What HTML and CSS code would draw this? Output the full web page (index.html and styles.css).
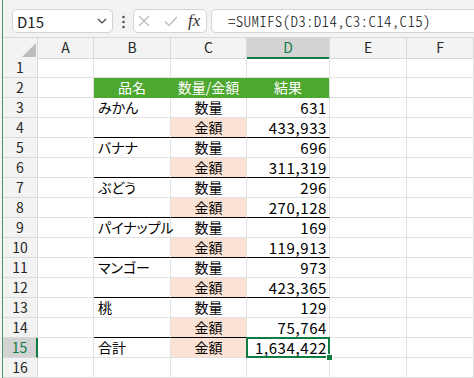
FILE: index.html
```html
<!DOCTYPE html>
<html lang="ja">
<head>
<meta charset="UTF-8" />
<title>SUMIFS</title>
<link rel="stylesheet" href="styles.css">
</head>
<body>

<div class="edge"></div>

<div class="excel">

  <!-- 数式バー -->
  <div class="toolbar">
    <div class="namebox">
      <span>D15</span>
      <svg width="10" height="6" viewBox="0 0 10 6"><path d="M1 1 L5 5 L9 1" fill="none" stroke="#444" stroke-width="1.2"/></svg>
    </div>
    <svg class="grip" width="3" height="14" viewBox="0 0 3 14"><circle cx="1.5" cy="2" r="1.3" fill="#555"/><circle cx="1.5" cy="7" r="1.3" fill="#555"/><circle cx="1.5" cy="12" r="1.3" fill="#555"/></svg>
    <div class="fxbox">
      <svg class="cancel" width="12" height="12" viewBox="0 0 12 12"><path d="M1 1 L11 11 M11 1 L1 11" stroke="#b8b8b8" stroke-width="1.2"/></svg>
      <svg class="enter" width="14" height="11" viewBox="0 0 14 11"><path d="M1 5.5 L5 9.5 L13 1" fill="none" stroke="#b8b8b8" stroke-width="1.2"/></svg>
      <span class="fx">fx</span>
    </div>
    <div class="formula">=SUMIFS(D3:D14,C3:C14,C15)</div>
  </div>

  <!-- シート -->
  <div class="sheet">
    <div class="row head">
      <div class="corner"><span class="tri"></span></div>
      <div class="ch">A</div><div class="ch">B</div><div class="ch">C</div>
      <div class="ch sel">D</div><div class="ch">E</div><div class="ch">F</div>
    </div>

    <div class="row">
      <div class="rh">1</div><div class="c"></div><div class="c"></div><div class="c"></div><div class="c"></div><div class="c"></div><div class="c"></div>
    </div>
    <div class="row">
      <div class="rh">2</div><div class="c"></div>
      <div class="c th">品名</div><div class="c th">数量/金額</div><div class="c th last">結果</div>
      <div class="c"></div><div class="c"></div>
    </div>

    <div class="row">
      <div class="rh">3</div><div class="c"></div>
      <div class="c name">みかん</div><div class="c kind">数量</div><div class="c val">631</div>
      <div class="c"></div><div class="c"></div>
    </div>
    <div class="row">
      <div class="rh">4</div><div class="c"></div>
      <div class="c name line"></div><div class="c kind amt line">金額</div><div class="c val line">433,933</div>
      <div class="c"></div><div class="c"></div>
    </div>

    <div class="row">
      <div class="rh">5</div><div class="c"></div>
      <div class="c name">バナナ</div><div class="c kind">数量</div><div class="c val">696</div>
      <div class="c"></div><div class="c"></div>
    </div>
    <div class="row">
      <div class="rh">6</div><div class="c"></div>
      <div class="c name line"></div><div class="c kind amt line">金額</div><div class="c val line">311,319</div>
      <div class="c"></div><div class="c"></div>
    </div>

    <div class="row">
      <div class="rh">7</div><div class="c"></div>
      <div class="c name">ぶどう</div><div class="c kind">数量</div><div class="c val">296</div>
      <div class="c"></div><div class="c"></div>
    </div>
    <div class="row">
      <div class="rh">8</div><div class="c"></div>
      <div class="c name line"></div><div class="c kind amt line">金額</div><div class="c val line">270,128</div>
      <div class="c"></div><div class="c"></div>
    </div>

    <div class="row">
      <div class="rh">9</div><div class="c"></div>
      <div class="c name">パイナップル</div><div class="c kind">数量</div><div class="c val">169</div>
      <div class="c"></div><div class="c"></div>
    </div>
    <div class="row">
      <div class="rh">10</div><div class="c"></div>
      <div class="c name line"></div><div class="c kind amt line">金額</div><div class="c val line">119,913</div>
      <div class="c"></div><div class="c"></div>
    </div>

    <div class="row">
      <div class="rh">11</div><div class="c"></div>
      <div class="c name">マンゴー</div><div class="c kind">数量</div><div class="c val">973</div>
      <div class="c"></div><div class="c"></div>
    </div>
    <div class="row">
      <div class="rh">12</div><div class="c"></div>
      <div class="c name line"></div><div class="c kind amt line">金額</div><div class="c val line">423,365</div>
      <div class="c"></div><div class="c"></div>
    </div>

    <div class="row">
      <div class="rh">13</div><div class="c"></div>
      <div class="c name">桃</div><div class="c kind">数量</div><div class="c val">129</div>
      <div class="c"></div><div class="c"></div>
    </div>
    <div class="row">
      <div class="rh">14</div><div class="c"></div>
      <div class="c name line"></div><div class="c kind amt line">金額</div><div class="c val line">75,764</div>
      <div class="c"></div><div class="c"></div>
    </div>

    <div class="row">
      <div class="rh sel">15</div><div class="c"></div>
      <div class="c name">合計</div><div class="c kind amt">金額</div><div class="c val active">1,634,422</div>
      <div class="c"></div><div class="c"></div>
    </div>
    <div class="row">
      <div class="rh">16</div><div class="c"></div><div class="c"></div><div class="c"></div><div class="c"></div><div class="c"></div><div class="c"></div>
    </div>
  </div>

</div>

</body>
</html>
```

FILE: styles.css
```css
body {
  margin: 0;
  width: 474px;
  height: 378px;
  overflow: hidden;
  display: flex;
  background-color: #fff;
  font-family: "Noto Sans CJK JP", sans-serif;
  color: #000;
}

.edge {
  width: 2px;
  flex-shrink: 0;
  background-color: #f4f4f4;
  border-right: 1px solid #4f9a6a;
}

.excel {
  flex: 1;
  min-width: 0;
  display: flex;
  flex-direction: column;
}

/* 数式バー */
.toolbar {
  height: 39px;
  box-sizing: border-box;
  padding-top: 9px;
  display: flex;
  align-items: flex-start;
  background-color: #f3f3f3;
  border-bottom: 1px solid #d9d9d9;
}

.namebox {
  margin-left: 9px;
  width: 101px;
  height: 24px;
  box-sizing: border-box;
  padding: 0 5px 0 4px;
  display: flex;
  align-items: center;
  justify-content: space-between;
  background-color: #fff;
  border: 1px solid #d4d4d4;
  border-radius: 5px;
  font-size: 15px;
  color: #222;
}

.grip {
  margin: 6px 0 0 9px;
}

.fxbox {
  margin-left: 8px;
  width: 74px;
  height: 24px;
  box-sizing: border-box;
  padding-left: 4px;
  display: flex;
  align-items: center;
  background-color: #fff;
  border: 1px solid #d4d4d4;
  border-radius: 5px;
}

.fxbox .enter {
  margin-left: 14px;
}

.fx {
  margin-left: 10px;
  font-family: "Liberation Serif", serif;
  font-style: italic;
  font-size: 17px;
  color: #333;
  line-height: 20px;
}

.formula {
  margin-left: 4px;
  margin-right: -10px;
  flex: 1;
  height: 24px;
  box-sizing: border-box;
  padding-left: 16px;
  background-color: #fff;
  border: 1px solid #d4d4d4;
  border-radius: 5px;
  font-size: 15px;
  line-height: 22px;
  letter-spacing: 0.3px;
  font-feature-settings: "hwid";
  font-weight: 300;
  color: #111;
  white-space: nowrap;
}

/* シート */
.row {
  display: grid;
  grid-template-columns: 35px 56px 77px 76px 83px 77px 1fr;
  height: 20px;
}

.row > div {
  box-sizing: border-box;
  border-right: 1px solid #e1e1e1;
  border-bottom: 1px solid #e1e1e1;
  white-space: nowrap;
}

.head > div {
  background-color: #f3f3f3;
  border-color: #d9d9d9;
  font-size: 14px;
  line-height: 19px;
  text-align: center;
  color: #262626;
}

.corner {
  display: flex;
  align-items: flex-end;
  justify-content: flex-end;
  padding: 0 1px 1px 0;
}

.tri {
  width: 0;
  height: 0;
  border-left: 14px solid transparent;
  border-bottom: 14px solid #bdbdbd;
}

.head .sel {
  background-color: #d3d3d3;
  color: #107c41;
  border-bottom: 2px solid #107c41;
}

.row > .rh {
  background-color: #f3f3f3;
  border-color: #d9d9d9;
  font-size: 14px;
  line-height: 19px;
  text-align: center;
  color: #262626;
}

.row > .rh.sel {
  background-color: #d3d3d3;
  color: #107c41;
  border-right: 2px solid #107c41;
}

.c {
  font-size: 14px;
  line-height: 19px;
  padding: 0 3px;
}

.name {
  font-feature-settings: "palt";
  padding-left: 4px;
}

.kind {
  text-align: center;
}

.val {
  text-align: right;
  font-size: 15px;
  letter-spacing: 0.6px;
  padding-right: 2px;
}

.row > .th {
  background-color: #4ea72e;
  border-color: #4ea72e;
  color: #fff;
  text-align: center;
}

.row > .th.last {
  border-right-color: #e1e1e1;
}

.amt {
  background-color: #fbe2d5;
}

.row > .line {
  border-bottom-color: #000;
}

.active {
  position: relative;
}

/* 選択セル */
.active::after {
  content: "";
  position: absolute;
  top: -1px;
  left: -1px;
  right: -1px;
  bottom: -1px;
  border: 2px solid #107c41;
}

.active::before {
  content: "";
  position: absolute;
  right: -4px;
  bottom: -4px;
  width: 5px;
  height: 5px;
  background-color: #107c41;
  border: 1px solid #fff;
  z-index: 1;
}
```
